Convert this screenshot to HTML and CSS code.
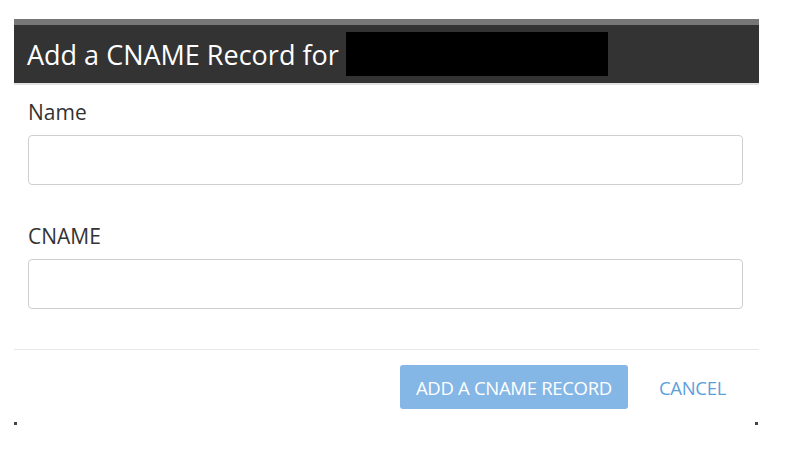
FILE: index.html
```html
<!DOCTYPE html>
<html>
<head>
<meta charset="utf-8">
<link rel="stylesheet" href="styles.css">
</head>
<body>
<div class="modal">
  <div class="modal-header">
    <h1 class="title">Add a CNAME Record for</h1>
    <span class="redact"></span>
  </div>
  <div class="modal-body">
    <label class="label">Name</label>
    <div class="input"></div>
    <label class="label label-2">CNAME</label>
    <div class="input"></div>
  </div>
  <div class="modal-footer">
    <button class="btn-primary">ADD A CNAME RECORD</button>
    <a class="btn-cancel">CANCEL</a>
  </div>
  <div class="corners"><span class="dot"></span><span class="dot"></span></div>
</div>
</body>
</html>
```
FILE: styles.css
```css
html, body { margin: 0; padding: 0; background: #fff; }
body { font-family: "Open Sans", "Noto Sans", sans-serif; }
.modal {
  width: 745px;
  margin-left: 14px;
  padding-top: 19px;
}
.modal-header {
  background: #333333;
  border-top: 6px solid #777777;
  border-bottom: 2px solid #e2e2e2;
  height: 58px;
  display: flex;
  align-items: center;
  padding-left: 13px;
}
.title {
  margin: 0;
  font-weight: 400;
  font-size: 27px;
  color: #fff;
  font-family: "Open Sans", sans-serif;
  white-space: nowrap;
}
.redact {
  display: block;
  width: 262px;
  height: 44px;
  background: #000;
  margin-left: 7px;
}
.modal-body {
  padding: 14px 16px 40px 14px;
  display: flex;
  flex-direction: column;
}
.label {
  font-size: 21px;
  color: #333;
  line-height: 26px;
  margin-bottom: 10px;
}
.label-2 { margin-top: 38px; }
.input {
  height: 48px;
  border: 1px solid #cfcfcf;
  border-radius: 4px;
  background: #fff;
}
.modal-footer {
  border-top: 1px solid #e8e8e8;
  display: flex;
  justify-content: flex-end;
  align-items: center;
  padding: 15px 33px 0 0;
  gap: 31px;
}
.btn-primary {
  width: 228px;
  height: 44px;
  background: #84b6e6;
  border: none;
  border-radius: 3px;
  color: #fff;
  font-family: "Open Sans", sans-serif;
  font-size: 18.5px;
  letter-spacing: -0.3px;
  padding: 0;
}
.btn-cancel {
  color: #5b9fdc;
  font-size: 18.5px;
  letter-spacing: -0.3px;
}
.corners {
  display: flex;
  justify-content: space-between;
  padding-top: 13px;
  padding-right: 1px;
}
.dot { width: 3px; height: 3px; background: #444; display: block; }
```
